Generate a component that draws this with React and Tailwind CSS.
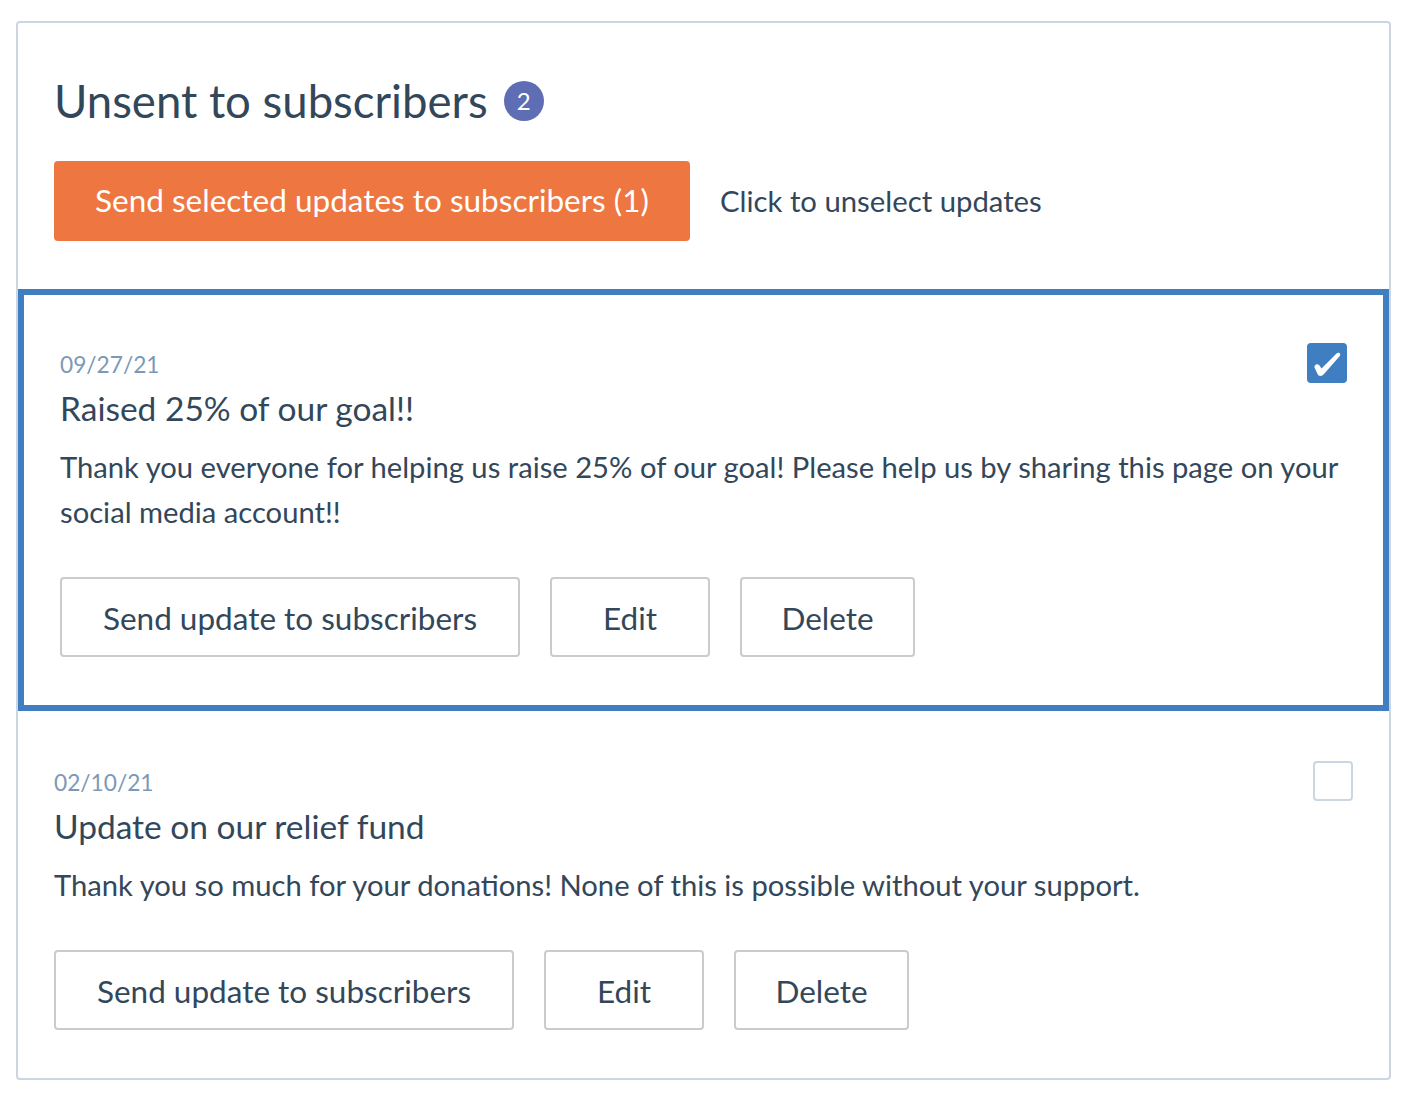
import { useState } from 'react';

const updates = [
  {
    id: 1,
    date: '09/27/21',
    title: 'Raised 25% of our goal!!',
    body: 'Thank you everyone for helping us raise 25% of our goal! Please help us by sharing this page on your social media account!!',
  },
  {
    id: 2,
    date: '02/10/21',
    title: 'Update on our relief fund',
    body: 'Thank you so much for your donations! None of this is possible without your support.',
  },
];

const CheckBox = ({ checked, onClick }) => (
  <button
    onClick={onClick}
    className={
      checked
        ? 'w-10 h-10 rounded-[4px] bg-[#3f7ec1] flex items-center justify-center'
        : 'w-10 h-10 rounded-[4px] border-2 border-[#cbd6e2] bg-white'
    }
  >
    {checked && (
      <svg width="40" height="40" viewBox="0 0 40 40">
        {/* heavy check mark */}
        <path
          d="M7.5 24.5 C7 21.5 10.5 20 12.5 22.5 L14.5 25.5 L29.5 10.5 C31.5 8.8 34.5 10.5 32.8 13 L17 31 C15 33.5 11.5 33.5 10.5 31 Z"
          fill="white"
        />
      </svg>
    )}
  </button>
);

const UpdateCard = ({ update, selected, onToggle }) => (
  <div
    className={
      selected
        ? 'border-[6px] border-[#3f7ec1] px-9 pt-12 pb-12'
        : 'px-9 pt-[50px] pb-12'
    }
  >
    <div className="flex justify-between items-center h-10">
      <span className="mt-1 text-[22.7px] text-[#7c98b6]">{update.date}</span>
      <CheckBox checked={selected} onClick={onToggle} />
    </div>
    <h3 className="mt-[3px] text-[33.5px] leading-[44px] text-[#33475b]">{update.title}</h3>
    <p className="mt-[14px] text-[29.2px] leading-[45px] text-[#33475b]">{update.body}</p>
    <div className="mt-[43px] flex gap-[30px]">
      <button className="h-20 w-[460px] pt-1 border-2 border-[#cbcbcb] rounded-[4px] text-[31.5px] text-[#33475b]">
        Send update to subscribers
      </button>
      <button className="h-20 w-[160px] pt-1 border-2 border-[#cbcbcb] rounded-[4px] text-[31.5px] text-[#33475b]">
        Edit
      </button>
      <button className="h-20 w-[175px] pt-1 border-2 border-[#cbcbcb] rounded-[4px] text-[31.5px] text-[#33475b]">
        Delete
      </button>
    </div>
  </div>
);

const App = () => {
  const [selected, setSelected] = useState([1]);

  const toggle = (id) => {
    setSelected((prev) => (prev.includes(id) ? prev.filter((x) => x !== id) : [...prev, id]));
  };

  return (
    <div className="min-h-screen bg-white pt-[21px] pl-4 font-['Lato','Open_Sans',sans-serif]">
      <div className="w-[1375px] border-2 border-[#cbd6e2] rounded-[4px] bg-white">
        <div className="px-9 pt-[50px] pb-12">
          <div className="flex items-center gap-4 h-14">
            <h2 className="text-[45.5px] text-[#33475b]">Unsent to subscribers</h2>
            <span className="w-10 h-10 rounded-full bg-[#5f6db5] text-white text-[24px] flex items-center justify-center">
              {updates.length}
            </span>
          </div>
          <div className="mt-8 flex items-center gap-[30px]">
            <button className="h-20 w-[636px] rounded-[4px] bg-[#ee7641] text-white text-[31.5px]">
              Send selected updates to subscribers ({selected.length})
            </button>
            <span className="text-[29.3px] text-[#33475b]">Click to unselect updates</span>
          </div>
        </div>
        {updates.map((u) => (
          <UpdateCard
            key={u.id}
            update={u}
            selected={selected.includes(u.id)}
            onToggle={() => toggle(u.id)}
          />
        ))}
      </div>
    </div>
  );
};

export default App;
